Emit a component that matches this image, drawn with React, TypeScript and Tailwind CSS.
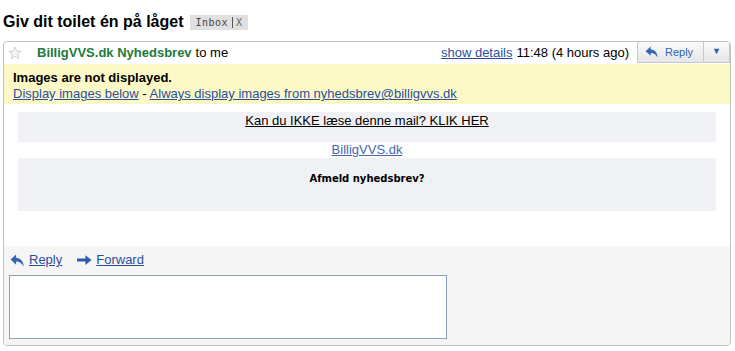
import React from "react";

const ReplyIcon = ({ className }: { className?: string }) => (
  <svg viewBox="0 0 16 14" className={className}>
    <path d="M6.5 0.5 L0.5 6 L6.5 11.5 L6.5 8.2 C10 8.2 12.5 9.7 14.5 13.5 C14.5 7.5 11 4.2 6.5 4 Z" fill="#3a64b4" />
  </svg>
);

const ForwardIcon = ({ className }: { className?: string }) => (
  <svg viewBox="0 0 16 12" className={className}>
    <path d="M0 4.3 H9 V0.8 L15.5 6 L9 11.2 V7.7 H0 Z" fill="#2a5db0" />
  </svg>
);

const StarIcon = ({ className }: { className?: string }) => (
  <svg viewBox="0 0 24 24" className={className}>
    <path
      d="M12 1.5 L14.9 8.6 L22.5 9.2 L16.7 14.1 L18.5 21.6 L12 17.6 L5.5 21.6 L7.3 14.1 L1.5 9.2 L9.1 8.6 Z"
      fill="#f4f4f4"
      stroke="#cfcfcf"
      strokeWidth="1.6"
      strokeLinejoin="round"
    />
  </svg>
);

export default function App() {
  return (
    <div className="w-[735px] h-[351px] bg-white overflow-hidden text-black" style={{ fontFamily: '"Liberation Sans", Arial, sans-serif' }}>
      <div className="flex items-center h-[41px] pl-[3px] pt-[3px]">
        <span className="text-[16px] font-bold leading-none">Giv dit toilet én på låget</span>
        <span className="ml-[7px] flex items-center h-[15px] bg-[#e0e0e0] px-[5px] text-[10px] text-[#444] tracking-[0.5px]" style={{ fontFamily: '"DejaVu Sans Mono", monospace' }}>
          Inbox
          <span className="ml-[4px] w-px h-[11px] bg-[#555]" />
          <span className="ml-[3px] text-[#666]">X</span>
        </span>
      </div>
      <div className="ml-[3px] w-[728px] h-[305px] border border-[#c3c3c3] rounded-[4px] flex flex-col overflow-hidden">
        <div className="flex items-center h-[22px] text-[13px]">
          <StarIcon className="ml-[4px] w-[14px] h-[14px]" />
          <span className="ml-[15px] font-bold text-[#207a3b]">BilligVVS.dk Nyhedsbrev</span>
          <span className="ml-[4px]">to me</span>
          <span className="ml-auto text-[#2a4f9e] underline">show details</span>
          <span className="ml-[4px]">11:48 (4 hours ago)</span>
          <div className="ml-[8px] flex h-[22px] self-start mt-[-1px]">
            <div className="flex items-center w-[67px] border border-[#c8c8c8] rounded-tl-[3px] bg-gradient-to-b from-[#fafafa] to-[#e6e6e6] text-[11px] text-[#3060b0]">
              <ReplyIcon className="ml-[7px] w-[14px] h-[12px]" />
              <span className="ml-[6px]">Reply</span>
            </div>
            <div className="flex items-center justify-center w-[26px] border border-l-0 border-[#c8c8c8] bg-gradient-to-b from-[#fafafa] to-[#e6e6e6] text-[9px] text-[#3060b0]">▼</div>
          </div>
        </div>
        <div className="h-[40px] bg-[#fdf9c7] pl-[9px] pt-[6px] text-[13px] leading-[16px]">
          <div className="font-bold">Images are not displayed.</div>
          <div>
            <span className="text-[#2a4f9e] underline">Display images below</span>
            <span> - </span>
            <span className="text-[#2a4f9e] underline">Always display images from nyhedsbrev@billigvvs.dk</span>
          </div>
        </div>
        <div className="bg-white pt-[8px] pb-[35px]">
          <div className="mx-[14px] h-[30px] bg-[#eff1f4] text-center text-[13px] leading-[15px] pt-[1px]">
            <span className="underline">Kan du IKKE læse denne mail? KLIK HER</span>
          </div>
          <div className="h-[16px] text-center text-[13px] leading-[15px]">
            <span className="text-[#4467b0] underline">BilligVVS.dk</span>
          </div>
          <div className="mx-[14px] h-[53px] bg-[#eff1f4] text-center pt-[15px] text-[10px] font-bold leading-[12px]" style={{ fontFamily: 'Verdana, "DejaVu Sans", sans-serif' }}>
            Afmeld nyhedsbrev?
          </div>
        </div>
        <div className="flex-1 bg-[#f5f5f5] flex flex-col">
          <div className="flex items-center h-[25px] pt-[3px] text-[13px]">
            <ReplyIcon className="ml-[6px] w-[15px] h-[13px]" />
            <span className="ml-[4px] text-[#2a4f9e] underline">Reply</span>
            <ForwardIcon className="ml-[15px] w-[15px] h-[12px]" />
            <span className="ml-[4px] text-[#2a4f9e] underline">Forward</span>
          </div>
          <div className="ml-[5px] mt-[4px] w-[438px] h-[64px] bg-white border border-[#8aa0bd]" />
        </div>
      </div>
    </div>
  );
}
